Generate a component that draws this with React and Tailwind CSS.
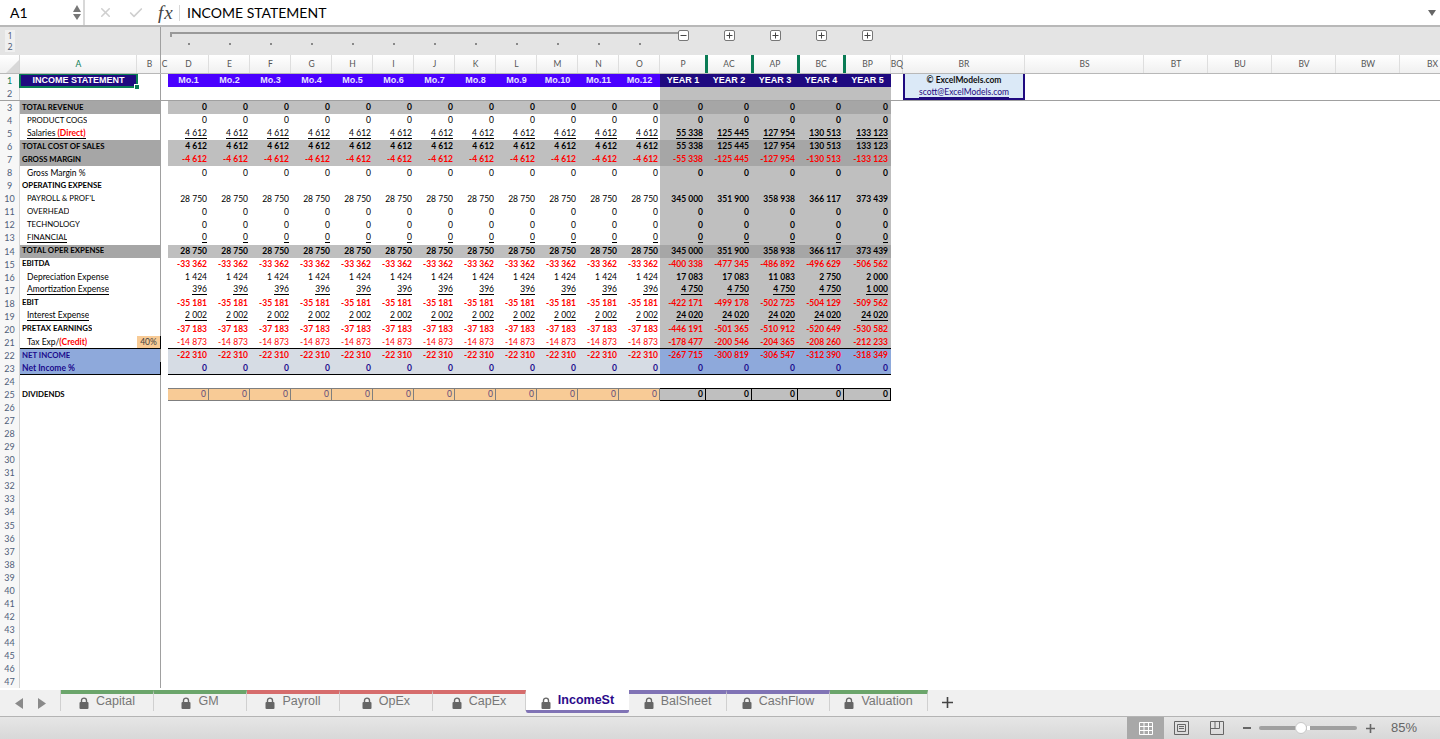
import { Check, X } from "lucide-react";

const COLS =
  "grid grid-cols-[20px_117px_24px_7px_repeat(12,41px)_46px_46px_46px_46px_47px_12px_122px_119px_64px_64px_64px_64px_65px]";

const MONTHS = ["D", "E", "F", "G", "H", "I", "J", "K", "L", "M", "N", "O"];
const YEARS = ["P", "AC", "AP", "BC", "BP"];
const TAIL = ["BS", "BT", "BU", "BV", "BW", "BX"];

const RED = "text-[#ff0000]";
const NAVY = "text-[#1a0a8c]";

const ROWS = {
  3: { label: "TOTAL REVENUE", bold: true, dark: true, month: "0", years: ["0", "0", "0", "0", "0"] },
  4: { label: "PRODUCT COGS", month: "0", years: ["0", "0", "0", "0", "0"] },
  5: { label: "Salaries", extra: "(Direct)", under: true, month: "4 612", years: ["55 338", "125 445", "127 954", "130 513", "133 123"] },
  6: { label: "TOTAL COST OF SALES", bold: true, dark: true, month: "4 612", years: ["55 338", "125 445", "127 954", "130 513", "133 123"] },
  7: { label: "GROSS MARGIN", bold: true, dark: true, red: true, month: "-4 612", years: ["-55 338", "-125 445", "-127 954", "-130 513", "-133 123"] },
  8: { label: "Gross Margin %", month: "0", years: ["0", "0", "0", "0", "0"] },
  9: { label: "OPERATING EXPENSE", bold: true, years: ["", "", "", "", ""] },
  10: { label: "PAYROLL & PROF'L", month: "28 750", years: ["345 000", "351 900", "358 938", "366 117", "373 439"] },
  11: { label: "OVERHEAD", month: "0", years: ["0", "0", "0", "0", "0"] },
  12: { label: "TECHNOLOGY", month: "0", years: ["0", "0", "0", "0", "0"] },
  13: { label: "FINANCIAL", under: true, month: "0", years: ["0", "0", "0", "0", "0"] },
  14: { label: "TOTAL OPER EXPENSE", bold: true, dark: true, month: "28 750", years: ["345 000", "351 900", "358 938", "366 117", "373 439"] },
  15: { label: "EBITDA", bold: true, red: true, month: "-33 362", years: ["-400 338", "-477 345", "-486 892", "-496 629", "-506 562"] },
  16: { label: "Depreciation Expense", month: "1 424", years: ["17 083", "17 083", "11 083", "2 750", "2 000"] },
  17: { label: "Amortization Expense", under: true, month: "396", years: ["4 750", "4 750", "4 750", "4 750", "1 000"] },
  18: { label: "EBIT", bold: true, red: true, lightRed: true, month: "-35 181", years: ["-422 171", "-499 178", "-502 725", "-504 129", "-509 562"] },
  19: { label: "Interest Expense", under: true, month: "2 002", years: ["24 020", "24 020", "24 020", "24 020", "24 020"] },
  20: { label: "PRETAX EARNINGS", bold: true, red: true, month: "-37 183", years: ["-446 191", "-501 365", "-510 912", "-520 649", "-530 582"] },
  21: { label: "Tax Exp/", extra: "(Credit)", red: true, lightRed: true, tax: true, month: "-14 873", years: ["-178 477", "-200 546", "-204 365", "-208 260", "-212 233"] },
  22: { label: "NET INCOME", blue: true, bold: true, red: true, month: "-22 310", years: ["-267 715", "-300 819", "-306 547", "-312 390", "-318 349"] },
  23: { label: "Net Income %", blue: true, bold: true, navy: true, month: "0", years: ["0", "0", "0", "0", "0"] },
};

const TABS = [
  { name: "Capital", w: "w-[93px]", bar: "border-t-[#6ba56b]" },
  { name: "GM", w: "w-[93px]", bar: "border-t-[#6ba56b]" },
  { name: "Payroll", w: "w-[93px]", bar: "border-t-[#d66c6c]" },
  { name: "OpEx", w: "w-[93px]", bar: "border-t-[#d66c6c]" },
  { name: "CapEx", w: "w-[93px]", bar: "border-t-[#d66c6c]" },
  { name: "IncomeSt", w: "w-[103px]", active: true },
  { name: "BalSheet", w: "w-[98px]", bar: "border-t-[#8073b5]" },
  { name: "CashFlow", w: "w-[103px]", bar: "border-t-[#8073b5]" },
  { name: "Valuation", w: "w-[98px]", bar: "border-t-[#6ba56b]" },
];

function RowNumber({ n, active }) {
  return (
    <div
      className={`flex items-center justify-center border-r border-[#d4d4d4] bg-[#f7f7f7] text-[9px] ${
        active ? "text-[#0a7c55]" : "text-[#50607a]"
      }`}
    >
      {n}
    </div>
  );
}

function Value({ text, under, className = "" }) {
  return (
    <div className={`flex items-center justify-end overflow-hidden pr-[2px] ${className}`}>
      {under ? <span className="border-b border-black leading-[9px]">{text}</span> : text}
    </div>
  );
}

function HeaderCell({ name, active, hidden }) {
  return (
    <div
      className={`relative flex items-center justify-center border-r border-[#dedede] pl-[1px] text-[8.5px] ${
        active ? "text-[#0a7c55]" : "text-[#555555]"
      }`}
    >
      {name}
      {hidden && <span className="absolute right-[-3px] top-0 z-10 h-full w-[3px] bg-[#0a7c55]" />}
    </div>
  );
}

function OutlineButton({ minus }) {
  return (
    <div className="mx-auto flex h-[11px] w-[11px] items-center justify-center rounded-[2px] border border-[#777777] bg-white text-[#444444]">
      <svg width="7" height="7" viewBox="0 0 7 7">
        <path d={minus ? "M0.5 3.5H6.5" : "M0.5 3.5H6.5M3.5 0.5V6.5"} stroke="currentColor" strokeWidth="1" />
      </svg>
    </div>
  );
}

function FormulaBar() {
  return (
    <div className="flex h-[25px] items-center bg-white font-['Lato',sans-serif]">
      <div className="w-[70px] pl-[10px] text-[14px] text-black">A1</div>
      <div className="flex w-[13px] flex-col items-center gap-[2px]">
        <svg width="8" height="7" viewBox="0 0 8 7">
          <path d="M4 0L8 7H0Z" fill="#777777" />
        </svg>
        <svg width="8" height="6" viewBox="0 0 8 6">
          <path d="M0 0H8L4 6Z" fill="#777777" />
        </svg>
      </div>
      <div className="h-[25px] w-[2px] bg-[#d8d8d8]" />
      <div className="flex w-[73px] items-center gap-[15px] pl-[13px]">
        <X size={15} strokeWidth={2.5} className="text-[#cfcfcf]" />
        <Check size={16} strokeWidth={2.5} className="text-[#cfcfcf]" />
      </div>
      <div className="w-[21px] font-['Liberation_Serif',serif] text-[19px] italic leading-none tracking-[1px] text-[#444444]">fx</div>
      <div className="h-[16px] w-[1px] bg-[#d8d8d8]" />
      <div className="flex-1 pl-[7px] text-[14px] text-black">INCOME STATEMENT</div>
      <svg width="8" height="6" viewBox="0 0 8 6" className="mr-[4px]">
        <path d="M0 0H8L4 6Z" fill="#666666" />
      </svg>
    </div>
  );
}

function OutlineBand() {
  return (
    <div className={`${COLS} h-[28px] bg-[#e4e4e4]`}>
      <div className="col-span-3 flex border-r border-[#a0a0a0]">
        <div className="ml-[5px] mt-[3px] flex w-[10px] flex-col text-center text-[9px] text-[#50607a]">
          <span className="h-[11px] bg-[#f0f0f0] leading-[11px]">1</span>
          <span className="h-[11px] bg-[#f0f0f0] leading-[11px]">2</span>
        </div>
      </div>
      <div />
      <div className="relative col-span-12 grid grid-cols-12 pt-[16px]">
        <span className="absolute left-[2px] top-[5px] h-[2px] w-[508px] bg-[#999999]" />
        <span className="absolute left-[2px] top-[5px] h-[5px] w-[2px] bg-[#999999]" />
        {MONTHS.map((m) => (
          <div key={m} className="flex justify-center">
            <span className="h-[2px] w-[2px] bg-[#888888]" />
          </div>
        ))}
      </div>
      {YEARS.map((y, i) => (
        <div key={y} className="pt-[3px]">
          <OutlineButton minus={i === 0} />
        </div>
      ))}
    </div>
  );
}

function ColumnHeader() {
  return (
    <div className={`${COLS} h-[19px] border-b border-[#b8b8b8] bg-gradient-to-b from-white to-[#f0f0f0] font-['Lato',sans-serif]`}>
      <div className="flex items-end justify-end border-r border-[#d4d4d4]">
        <svg width="13" height="13" viewBox="0 0 13 13">
          <path d="M13 0V13H0Z" fill="#d8d8d8" />
        </svg>
      </div>
      <HeaderCell name="A" active />
      <div className="flex items-center justify-center border-r border-[#a0a0a0] pl-[2px] text-[8.5px] text-[#555555]">B</div>
      <div className="flex items-center justify-center text-[8.5px] text-[#555555]">C</div>
      {MONTHS.map((m) => (
        <HeaderCell key={m} name={m} />
      ))}
      {YEARS.map((y, i) => (
        <HeaderCell key={y} name={y} hidden={i < 4} />
      ))}
      <HeaderCell name="BQ" />
      <HeaderCell name="BR" />
      {TAIL.map((t) => (
        <HeaderCell key={t} name={t} />
      ))}
    </div>
  );
}

function TitleRows() {
  return (
    <>
      <div className={`${COLS} h-[13px]`}>
        <RowNumber n={1} active />
        <div className="relative flex items-center justify-center bg-[#1f0a80] font-['Liberation_Sans',sans-serif] text-[9px] font-bold text-white outline outline-2 -outline-offset-1 outline-[#0a7c55]">
          INCOME STATEMENT
          <span className="absolute bottom-[-3px] right-[-3px] z-10 h-[6px] w-[6px] border border-white bg-[#0a7c55]" />
        </div>
        <div className="border-r border-[#a0a0a0]" />
        <div />
        {MONTHS.map((m, i) => (
          <div key={m} className="flex items-center justify-center bg-[#4a00ff] font-['Liberation_Sans',sans-serif] text-[9px] font-bold text-[#e8e0ff]">
            Mo.{i + 1}
          </div>
        ))}
        {YEARS.map((y, i) => (
          <div key={y} className="flex items-center justify-center bg-[#1f0a80] font-['Liberation_Sans',sans-serif] text-[9px] font-bold text-white">
            YEAR {i + 1}
          </div>
        ))}
        <div />
        <div className="flex items-center justify-center border-x-2 border-[#1f0a80] bg-[#dbe9f7] text-[8.5px] font-bold text-[#111111]">
          © ExcelModels.com
        </div>
      </div>
      <div className={`${COLS} h-[14px] border-b border-[#a0a0a0]`}>
        <RowNumber n={2} />
        <div />
        <div className="border-r border-[#a0a0a0]" />
        <div />
        <div className="col-span-12" />
        <div className="col-span-5 bg-[#bfbfbf]" />
        <div />
        <div className="flex items-center justify-center border-x-2 border-b-2 border-[#1f0a80] bg-[#dbe9f7] text-[8.5px] text-[#1f0a80]">
          <span className="border-b border-[#1f0a80] leading-[9px]">scott@ExcelModels.com</span>
        </div>
      </div>
    </>
  );
}

function LabelText({ row }) {
  const pad = row.bold ? "pl-[2px]" : "pl-[7px]";
  const weight = row.bold ? "font-bold" : "";
  const color = row.blue ? NAVY : "text-black";
  // caps labels run wider in Lato than in the sheet's font
  const size = row.label === row.label.toUpperCase() ? "text-[7.8px]" : "";
  const body = (
    <>
      {row.label}
      {row.extra && (
        <>
          {row.extra === "(Direct)" ? " " : ""}
          <span className={`font-bold ${RED}`}>{row.extra}</span>
        </>
      )}
    </>
  );
  return (
    <div className={`flex items-center overflow-hidden whitespace-nowrap ${pad} ${weight} ${color} ${size}`}>
      {row.under ? <span className="border-b border-black leading-[9px]">{body}</span> : body}
    </div>
  );
}

function DataRow({ n, row }) {
  let labelBg = "";
  let monthBg = "";
  let yearBg = "bg-[#bfbfbf]";
  if (row.dark) {
    labelBg = "bg-[#a6a6a6]";
    monthBg = "bg-[#bfbfbf]";
    yearBg = "bg-[#a6a6a6]";
  }
  if (row.blue) {
    labelBg = "bg-[#8ea9db]";
    monthBg = "bg-[#d6dce4]";
    yearBg = "bg-[#8ea9db]";
  }
  const line = n === 21 || n === 23 ? "border-b border-black" : "";
  let tone = "text-black";
  if (row.red) tone = RED;
  if (row.navy) tone = NAVY;
  const monthWeight = row.bold ? "font-bold" : "font-normal";

  return (
    <div className={`${COLS} h-[13.05px]`}>
      <RowNumber n={n} />
      {row.tax ? (
        <>
          <div className={`${line} flex`}>
            <LabelText row={row} />
          </div>
          <div className={`${line} flex items-center justify-center border-r border-[#a0a0a0] bg-[#f8cb96] text-[#404040]`}>40%</div>
        </>
      ) : (
        <div className={`col-span-2 flex border-r border-[#a0a0a0] ${labelBg} ${line}`}>
          <LabelText row={row} />
        </div>
      )}
      <div />
      {MONTHS.map((m) => (
        <Value
          key={m}
          text={row.month}
          under={row.under}
          className={`${monthBg} ${tone} ${monthWeight} ${line}`}
        />
      ))}
      {row.years.map((v, i) => (
        <Value
          key={YEARS[i]}
          text={v}
          under={row.under}
          className={`${yearBg} ${tone} font-bold ${line} pr-[3px]`}
        />
      ))}
    </div>
  );
}

function Dividends() {
  return (
    <div className={`${COLS} h-[13.05px]`}>
      <RowNumber n={25} />
      <div className="col-span-2 flex items-center border-r border-[#a0a0a0] pl-[2px] text-[7.8px] font-bold text-black">DIVIDENDS</div>
      <div />
      {MONTHS.map((m) => (
        <Value key={m} text="0" className="border-y border-r border-[#7f7f7f] bg-[#f8cb96] text-[#5b4a7a]" />
      ))}
      {YEARS.map((y) => (
        <Value key={y} text="0" className="border-y border-r border-black bg-[#bfbfbf] font-bold text-black" />
      ))}
    </div>
  );
}

function EmptyRow({ n }) {
  return (
    <div className={`${COLS} h-[13.05px]`}>
      <RowNumber n={n} />
      <div className="col-span-2 border-r border-[#a0a0a0]" />
    </div>
  );
}

function Lock() {
  return (
    <svg width="10" height="12" viewBox="0 0 10 12" className="block shrink-0">
      <path d="M2.5 5.5V3.6a2.5 2.5 0 0 1 5 0v1.9" fill="none" stroke="#666666" strokeWidth="1.4" />
      <rect x="0.5" y="5" width="9" height="7" rx="1" fill="#666666" />
    </svg>
  );
}

function TabStrip() {
  return (
    <div className="flex h-[27px] border-b border-[#b4b4b4] bg-[#f0f0f0] font-['Liberation_Sans',sans-serif] text-[12.5px] leading-[14px]">
      <div className="flex h-[21px] w-[61px] items-center gap-[15px] border-r border-[#d0d0d0] pl-[15px] pt-[6px]">
        <svg width="8" height="11" viewBox="0 0 8 11">
          <path d="M8 0V11L0 5.5Z" fill="#8a8a8a" />
        </svg>
        <svg width="8" height="11" viewBox="0 0 8 11">
          <path d="M0 0V11L8 5.5Z" fill="#8a8a8a" />
        </svg>
      </div>
      {TABS.map((t) =>
        t.active ? (
          <div
            key={t.name}
            className={`${t.w} flex h-[23px] items-start justify-center gap-[7px] rounded-b-[2px] border-b-[3px] border-[#8073b5] bg-white pt-[3px] font-bold text-[#2b0a8a]`}
          >
            <span className="pt-[4px]">
              <Lock />
            </span>
            {t.name}
          </div>
        ) : (
          <div
            key={t.name}
            className={`${t.w} flex h-[21px] items-start justify-center gap-[7px] border-r border-t-[4px] border-r-[#d0d0d0] ${t.bar} text-[#777777]`}
          >
            <span className="pt-[3px]">
              <Lock />
            </span>
            {t.name}
          </div>
        ),
      )}
      <div className="flex w-[38px] items-center justify-center pb-[1px] text-[#444444]">
        <svg width="11" height="11" viewBox="0 0 11 11">
          <path d="M0 5.5H11M5.5 0V11" stroke="currentColor" strokeWidth="1.6" />
        </svg>
      </div>
    </div>
  );
}

function StatusBar() {
  return (
    <div className="flex h-[22px] items-stretch justify-end bg-gradient-to-b from-[#e6e6e6] to-[#d8d8d8] font-['Liberation_Sans',sans-serif]">
      <div className="flex w-[37px] items-center justify-center bg-[#a8a8a8]">
        <svg width="14" height="13" viewBox="0 0 14 13" fill="none" stroke="white" strokeWidth="1">
          <path d="M0.5 0.5H13.5V12.5H0.5ZM0.5 4.5H13.5M0.5 8.5H13.5M5 0.5V12.5M9.5 0.5V12.5" />
        </svg>
      </div>
      <div className="flex w-[35px] items-center justify-center">
        <svg width="15" height="14" viewBox="0 0 15 14" fill="none" stroke="#666666" strokeWidth="1">
          <path d="M0.5 0.5H14.5V13.5H0.5ZM3.5 3.5H11.5V10.5H3.5ZM5 5.5H10M5 7.5H10" />
        </svg>
      </div>
      <div className="flex w-[36px] items-center justify-center">
        <svg width="14" height="14" viewBox="0 0 14 14" fill="none" stroke="#666666" strokeWidth="1">
          <path d="M0.5 0.5H13.5V13.5H0.5ZM0.5 7.5H9.5V0.5M5 0.5V7.5" />
        </svg>
      </div>
      <div className="flex w-[24px] items-center justify-end pr-[8px]">
        <span className="h-[2px] w-[8px] bg-[#666666]" />
      </div>
      <div className="flex w-[98px] items-center">
        <div className="relative h-[4px] w-full rounded-full bg-[#a0a0a0]">
          <span className="absolute left-[36px] top-[-4px] h-[12px] w-[12px] rounded-full border border-[#c8c8c8] bg-white" />
          <span className="absolute left-[48px] top-0 h-[4px] w-[3px] bg-white" />
        </div>
      </div>
      <div className="flex w-[27px] items-center justify-center text-[#666666]">
        <svg width="9" height="9" viewBox="0 0 9 9">
          <path d="M0 4.5H9M4.5 0V9" stroke="currentColor" strokeWidth="1.6" />
        </svg>
      </div>
      <div className="flex w-[56px] items-center justify-start pl-[7px] text-[13px] text-[#666666]">85%</div>
    </div>
  );
}

export default function App() {
  const numbers = Array.from({ length: 47 }, (_, i) => i + 1);

  return (
    <div className="flex h-[739px] w-[1440px] flex-col overflow-hidden bg-white">
      <FormulaBar />
      <div className="h-[2px] border-y border-[#b8b8b8]" />
      <OutlineBand />
      <ColumnHeader />
      <div className="flex-1 overflow-hidden font-['Lato',sans-serif] text-[8.5px] leading-none">
        <TitleRows />
        {numbers.slice(2).map((n) => {
          if (ROWS[n]) return <DataRow key={n} n={n} row={ROWS[n]} />;
          if (n === 25) return <Dividends key={n} />;
          return <EmptyRow key={n} n={n} />;
        })}
      </div>
      <TabStrip />
      <StatusBar />
    </div>
  );
}
